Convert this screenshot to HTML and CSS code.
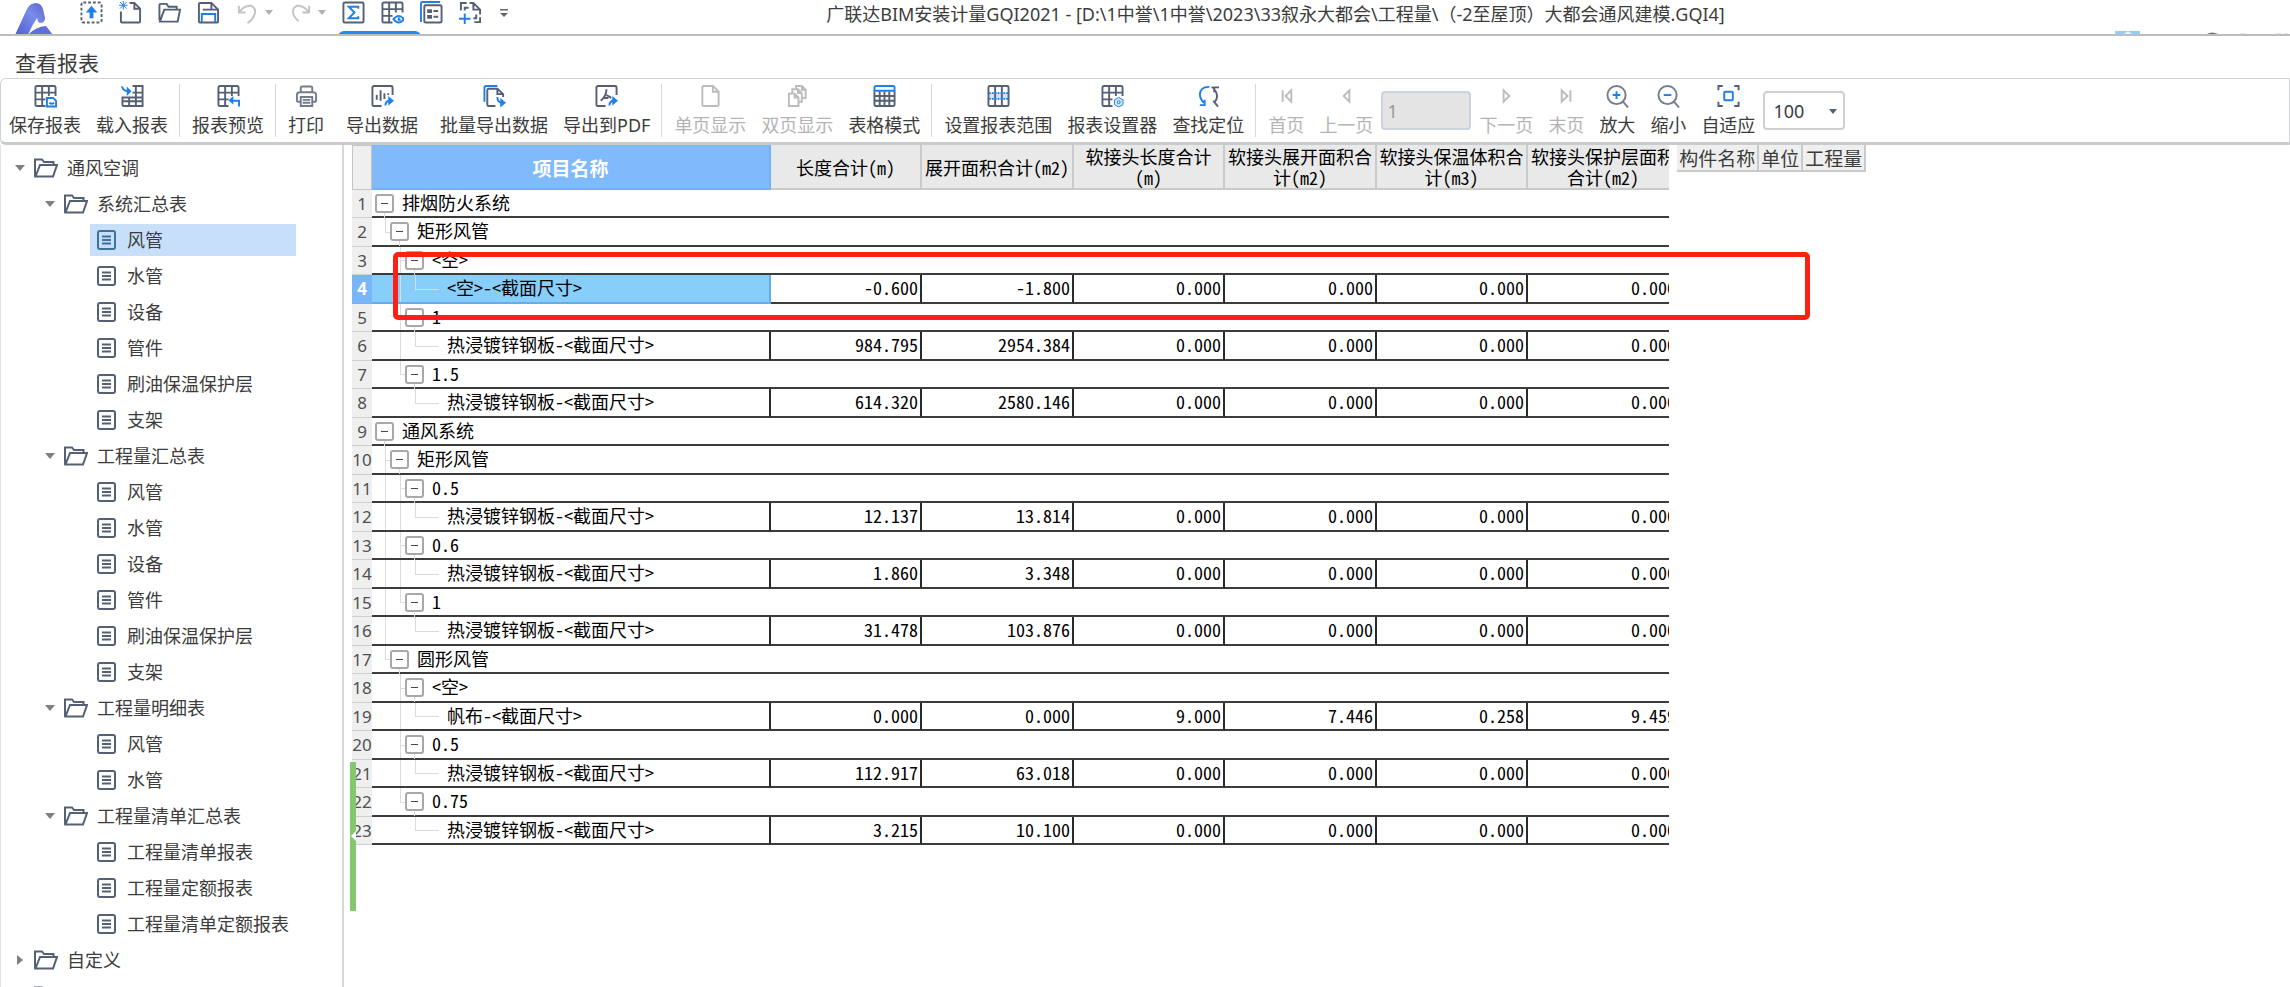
FILE: index.html
```html
<!DOCTYPE html>
<html lang="zh-CN">
<head>
<meta charset="utf-8">
<title>广联达BIM安装计量GQI2021</title>
<link rel="stylesheet" href="styles.css">
</head>
<body>
<svg class="defs" aria-hidden="true">
  <symbol id="folder" viewBox="0 0 24 20"><path d="M1 18.500V1.500h7l2 2.500h9.500v3M1.500 18.500L6 7h17l-4 11.500z"/></symbol>
  <symbol id="doc" viewBox="0 0 20 20"><rect x="1" y="1" width="17" height="18" rx="2"/><path d="M5 6.500h9M5 10h9M5 13.500h9"/></symbol>
  <symbol id="grid" viewBox="0 0 24 24"><path d="M12 22.500H3a1.500 1.500 0 0 1-1.500-1.500V3A1.500 1.500 0 0 1 3 1.500h18A1.500 1.500 0 0 1 22.500 3v9M1.500 8.500h21M1.500 15.500H12M8.500 1.500v21M15.500 1.500V12"/></symbol>
  <symbol id="caret" viewBox="0 0 10 6"><path d="M0 0h10L5 6z"/></symbol>
</svg>

<header class="titlebar">
  <svg class="logo" viewBox="0 0 38 32"><defs><linearGradient id="lg" x1="0" y1="1" x2="1" y2="0"><stop offset="0" stop-color="#4c5fd0"/><stop offset=".6" stop-color="#7a8cea"/><stop offset="1" stop-color="#5a62c8"/></linearGradient></defs><path fill="url(#lg)" d="M0 32L12 6Q15 0 21 0q5 0 7 6l2 9q0 5-5 5-2 0-3-5-6 9-9 17z"/><path fill="#5f6fdb" d="M13 32q7-8 18-9l7 9z"/></svg>
  <nav class="quick" aria-label="快速访问">
    <button type="button" aria-label="上传"><svg viewBox="0 0 24 24"><rect x="1.500" y="1.500" width="21" height="21" rx="2" stroke-dasharray="3 2"/><path class="fb" d="M12 5l6 7h-4v6h-4v-6H6z"/></svg></button>
    <button type="button" aria-label="新建"><svg viewBox="0 0 24 24"><path d="M2 11v10.500a1 1 0 0 0 1 1h18a1 1 0 0 0 1-1V8l-6-6h-5M16 2v6h6"/><path class="b thin" d="M1 1l7 7M8 1L1 8M4.500 0v9M0 4.500h9"/></svg></button>
    <button type="button" aria-label="打开"><svg viewBox="0 0 24 24"><path d="M1.500 20V4.500a1.500 1.500 0 0 1 1.500-1.500h6l2 3h8.500V9M2 21.500L6.500 9H23l-2.500 12.500z"/></svg></button>
    <button type="button" aria-label="保存"><svg viewBox="0 0 24 24"><path d="M2 21.500V3a1 1 0 0 1 1-1h12l7 7v12.500a1 1 0 0 1-1 1H3a1 1 0 0 1-1-1M6 9h8M15 2v7h7"/><path class="b" d="M5 22v-8.500h14V22"/></svg></button>
    <span class="split"><button type="button" aria-label="撤销"><svg class="off" viewBox="0 0 24 24"><path d="M3 5v7h7M3 12Q9 4 16 5q6 3 3 10-2 5-7 8"/></svg></button><button type="button" class="more" aria-label="撤销列表"><svg class="tri"><use href="#caret"/></svg></button></span>
    <span class="split"><button type="button" aria-label="重做"><svg class="off" viewBox="0 0 24 24"><path d="M21 5v7h-7M21 12Q15 4 8 5 2 8 5 15q2 4 5 6"/></svg></button><button type="button" class="more" aria-label="重做列表"><svg class="tri"><use href="#caret"/></svg></button></span>
    <button type="button" aria-label="汇总"><svg viewBox="0 0 24 24"><rect x="1.500" y="1.500" width="21" height="21" rx="1.500"/><path class="b" d="M17 8V6H7l6 6-6 6h10v-2"/></svg></button>
    <button type="button" aria-label="查看报表"><svg viewBox="0 0 24 24"><use href="#grid"/><path class="b" d="M13 19q5.500-7 11 0-5.500 7-11 0zM18.500 17v2.500h2"/></svg></button>
    <button type="button" aria-label="属性"><svg viewBox="0 0 24 24"><path class="b" d="M1 22V2.500A1.500 1.500 0 0 1 2.500 1H21"/><rect x="4.500" y="4.500" width="18" height="18" rx="1.500"/><path d="M8.500 9.500h3v2h-3zM8.500 15.500h3v2h-3zM14 10.500h5M14 16.500h5"/></svg></button>
    <button type="button" aria-label="添加页"><svg viewBox="0 0 24 24"><path d="M2 10V2h6M11 2h4l7 7v5M22 17v5h-6M15 2v7h7M6 10V7h4M18 14v4h-3"/><path class="b" d="M6 13v11M0 18.500h12"/></svg></button>
    <button type="button" class="more" aria-label="自定义快速访问"><svg class="menu" viewBox="0 0 10 12"><path d="M0 1h10v2H0zM0 6h10l-5 5z"/></svg></button>
  </nav>
  <h1>广联达BIM安装计量GQI2021 - [D:\1中誉\1中誉\2023\33叙永大都会\工程量\（-2至屋顶）大都会通风建模.GQI4]</h1>
  <svg class="cutoff" viewBox="0 0 250 34"><path fill="#9acbf8" d="M75 31h25v3H75z"/><path fill="#e6f2fd" d="M84 34l4-3 4 3z"/><path fill="#70757d" d="M167 34q5-3 11 0z"/><path fill="#e4e4e4" d="M200 33h6v1h-6zM236 33h5v1h-5zM244 33h4v1h-4z"/></svg>
</header>

<section class="ribbon">
  <h2>查看报表</h2>
  <div class="toolbar">
    <div class="group">
      <button type="button"><svg viewBox="0 0 24 24"><use href="#grid"/><path class="b" d="M13.500 14h6.500l3 3v6h-9.500zM16 19q2.500 2 5 0"/></svg>保存报表</button>
      <button type="button"><svg viewBox="0 0 24 24"><path d="M12 1.500h10.500v21H3a1.500 1.500 0 0 1-1.500-1.500v-7.500h21M12 8.500h10.500M15.500 1.500v21M8.500 13v9.500M1.500 17.500h21"/><path class="b" d="M1 2q1 5 7 5"/><path class="fb" d="M6 2l5 5-5 5z"/></svg>载入报表</button>
    </div>
    <div class="group">
      <button type="button"><svg viewBox="0 0 24 24"><use href="#grid"/><path class="b" d="M23 23v-6h-8"/><path class="fb" d="M17 12v9l-5-4.500z"/></svg>报表预览</button>
    </div>
    <div class="group">
      <button type="button"><svg class="soft" viewBox="0 0 24 24"><path d="M6 8V3.500A1.500 1.500 0 0 1 7.500 2h9A1.500 1.500 0 0 1 18 3.500V8M6 18H3a1 1 0 0 1-1-1v-6q0-3 3-3h14q3 0 3 3v6a1 1 0 0 1-1 1h-3M6 13h12v9.500H6zM8 16h8M8 19h8"/></svg>打印</button>
      <button type="button" class="wide"><svg viewBox="0 0 24 24"><path d="M11 22.500H3A1.500 1.500 0 0 1 1.500 21V3A1.500 1.500 0 0 1 3 1.500h18A1.500 1.500 0 0 1 22.500 3v8M6 11v5M10 6v11M14 9v6M18 9v2"/><path class="b" d="M15 22q0-5 5-5"/><path class="fb" d="M18 12l6 5-6 5z"/></svg>导出数据</button>
      <button type="button"><svg viewBox="0 0 24 24"><path class="b" d="M1.500 18V3A1.500 1.500 0 0 1 3 1.500h12"/><path d="M13 22.500H6A1.500 1.500 0 0 1 4.500 21V6A1.500 1.500 0 0 1 6 4.500h9l6 5.500v3M15 4.500V10h6"/><path class="b" d="M15 13q0 6 5 6"/><path class="fb" d="M18 14l6 5-6 5z"/></svg>批量导出数据</button>
      <button type="button"><svg viewBox="0 0 24 24"><path d="M11 22.500H3A1.500 1.500 0 0 1 1.500 21V3A1.500 1.500 0 0 1 3 1.500h18A1.500 1.500 0 0 1 22.500 3v8M12 5q0 7-6 12M12 11l5 3M8 14h6"/><path class="b" d="M15 22q0-5 5-5"/><path class="fb" d="M18 12l6 5-6 5z"/></svg>导出到PDF</button>
    </div>
    <div class="group">
      <button type="button" disabled><svg viewBox="0 0 24 24"><path d="M4 1.500h10.500l6 6V21a1.500 1.500 0 0 1-1.500 1.500H5A1.500 1.500 0 0 1 3.500 21V3A1.500 1.500 0 0 1 5 1.500M14.500 1.500v6h6"/></svg>单页显示</button>
      <button type="button" disabled><svg viewBox="0 0 24 24"><path d="M3 9.500h6l4 4v9H3zM9 9.500v4h4M6.500 9V5h6L16.500 9v9H13M12.500 5v4h4M10.500 5V1.500h6l4 4V14h-4M16.500 1.500v4h4"/></svg>双页显示</button>
      <button type="button"><svg viewBox="0 0 24 24"><path d="M1.500 7v14A1.500 1.500 0 0 0 3 22.500h18a1.500 1.500 0 0 0 1.500-1.500V7M1.500 12h21M1.500 17h21M7 7v15M12 7v15M17 7v15"/><path class="b" d="M1.500 6.500V3A1.500 1.500 0 0 1 3 1.500h18A1.500 1.500 0 0 1 22.500 3v3.500z"/></svg>表格模式</button>
    </div>
    <div class="group">
      <button type="button"><svg viewBox="0 0 24 24"><path class="pale" d="M2 9h20v6H2z"/><rect x="1.500" y="1.500" width="21" height="21" rx="1.500"/><path d="M8.500 1.500v21M15.500 1.500v21"/><path class="b" stroke-dasharray="2 1" d="M2 9h20M2 15h20"/></svg>设置报表范围</button>
      <button type="button"><svg viewBox="0 0 24 24"><use href="#grid"/><path class="pale" d="M18.500 13.500l4.500 2.500v5l-4.500 2.500L14 21v-5z"/><path class="b thin" d="M18.500 13.500l4.500 2.500v5l-4.500 2.500L14 21v-5zM17 18.500a1.500 1.500 0 1 0 3 0a1.500 1.500 0 1 0-3 0"/></svg>报表设置器</button>
      <button type="button"><svg viewBox="0 0 24 24"><path class="b" d="M13 2.500Q4 2 3 10q0 5 4 9M3 21.500h5V16"/><path d="M15 3q2 0 3 1M18 8V3h5M18 5q6 7 0 14M17 17l5 6"/></svg>查找定位</button>
    </div>
    <div class="group pager">
      <button type="button" disabled><svg viewBox="0 0 24 24"><path d="M8 6v12M17 6v12l-6-6z"/></svg>首页</button>
      <button type="button" disabled><svg viewBox="0 0 24 24"><path d="M15 6v12l-6-6z"/></svg>上一页</button>
      <input type="text" value="1" aria-label="页码" disabled>
      <button type="button" disabled><svg viewBox="0 0 24 24"><path d="M9 6v12l6-6z"/></svg>下一页</button>
      <button type="button" disabled><svg viewBox="0 0 24 24"><path d="M16 6v12M7 6v12l6-6z"/></svg>末页</button>
      <button type="button"><svg class="soft" viewBox="0 0 24 24"><circle cx="11" cy="11" r="9.500"/><path d="M17.500 17.500L23 24"/><path class="b" d="M11 7v8M7 11h8"/></svg>放大</button>
      <button type="button"><svg class="soft" viewBox="0 0 24 24"><circle cx="11" cy="11" r="9.500"/><path d="M17.500 17.500L23 24"/><path class="b" d="M7 11h8"/></svg>缩小</button>
      <button type="button"><svg viewBox="0 0 24 24"><path d="M1.500 6V1.500H6M18 1.500h4.500V6M22.500 18v4.500H18M6 22.500H1.500V18"/><rect class="b" x="7.500" y="7.500" width="9" height="9" rx="1"/></svg>自适应</button>
      <span class="zoom"><select aria-label="缩放比例"><option>100</option></select><svg class="tri"><use href="#caret"/></svg></span>
    </div>
  </div>
</section>

<main class="workspace">
  <nav class="tree" aria-label="报表目录">
    <ul>
      <li class="l0"><svg class="tri"><use href="#caret"/></svg><svg class="fold"><use href="#folder"/></svg>通风空调</li>
      <li class="l1"><svg class="tri"><use href="#caret"/></svg><svg class="fold"><use href="#folder"/></svg>系统汇总表</li>
      <li class="l2"><a class="on" href="#"><svg class="doc"><use href="#doc"/></svg>风管</a></li>
      <li class="l2"><a href="#"><svg class="doc"><use href="#doc"/></svg>水管</a></li>
      <li class="l2"><a href="#"><svg class="doc"><use href="#doc"/></svg>设备</a></li>
      <li class="l2"><a href="#"><svg class="doc"><use href="#doc"/></svg>管件</a></li>
      <li class="l2"><a href="#"><svg class="doc"><use href="#doc"/></svg>刷油保温保护层</a></li>
      <li class="l2"><a href="#"><svg class="doc"><use href="#doc"/></svg>支架</a></li>
      <li class="l1"><svg class="tri"><use href="#caret"/></svg><svg class="fold"><use href="#folder"/></svg>工程量汇总表</li>
      <li class="l2"><a href="#"><svg class="doc"><use href="#doc"/></svg>风管</a></li>
      <li class="l2"><a href="#"><svg class="doc"><use href="#doc"/></svg>水管</a></li>
      <li class="l2"><a href="#"><svg class="doc"><use href="#doc"/></svg>设备</a></li>
      <li class="l2"><a href="#"><svg class="doc"><use href="#doc"/></svg>管件</a></li>
      <li class="l2"><a href="#"><svg class="doc"><use href="#doc"/></svg>刷油保温保护层</a></li>
      <li class="l2"><a href="#"><svg class="doc"><use href="#doc"/></svg>支架</a></li>
      <li class="l1"><svg class="tri"><use href="#caret"/></svg><svg class="fold"><use href="#folder"/></svg>工程量明细表</li>
      <li class="l2"><a href="#"><svg class="doc"><use href="#doc"/></svg>风管</a></li>
      <li class="l2"><a href="#"><svg class="doc"><use href="#doc"/></svg>水管</a></li>
      <li class="l1"><svg class="tri"><use href="#caret"/></svg><svg class="fold"><use href="#folder"/></svg>工程量清单汇总表</li>
      <li class="l2"><a href="#"><svg class="doc"><use href="#doc"/></svg>工程量清单报表</a></li>
      <li class="l2"><a href="#"><svg class="doc"><use href="#doc"/></svg>工程量定额报表</a></li>
      <li class="l2"><a href="#"><svg class="doc"><use href="#doc"/></svg>工程量清单定额报表</a></li>
      <li class="l0"><svg class="tri shut"><use href="#caret"/></svg><svg class="fold"><use href="#folder"/></svg>自定义</li>
      <li class="l0"><svg class="tri shut"><use href="#caret"/></svg><svg class="fold"><use href="#folder"/></svg></li>
    </ul>
  </nav>

  <section class="report">
    <table>
      <colgroup><col class="c-no"><col class="c-name"><col class="c-a"><col class="c-b"><col class="c-a"><col class="c-b"><col class="c-a"><col class="c-b"></colgroup>
      <thead><tr><td class="corner"></td><th class="key">项目名称</th><th>长度合计(m)</th><th>展开面积合计(m2)</th><th>软接头长度合计(m)</th><th>软接头展开面积合计(m2)</th><th>软接头保温体积合计(m3)</th><th>软接头保护层面积合计(m2)</th></tr></thead>
      <tbody>
        <tr><th>1</th><td colspan="7"><div class="node"><button type="button" aria-label="折叠"></button>排烟防火系统</div></td></tr>
        <tr><th>2</th><td colspan="7"><div class="node"><i class="end"></i><button type="button" aria-label="折叠"></button>矩形风管</div></td></tr>
        <tr><th>3</th><td colspan="7"><div class="node"><i></i><i class="tee"></i><button type="button" aria-label="折叠"></button>&lt;空&gt;</div></td></tr>
        <tr class="cur"><th>4</th><td><div class="node"><i></i><i class="bar"></i><i class="end leaf"></i>&lt;空&gt;-&lt;截面尺寸&gt;</div></td><td>-0.600</td><td>-1.800</td><td>0.000</td><td>0.000</td><td>0.000</td><td>0.000</td></tr>
        <tr><th>5</th><td colspan="7"><div class="node"><i></i><i class="tee"></i><button type="button" aria-label="折叠"></button>1</div></td></tr>
        <tr><th>6</th><td><div class="node"><i></i><i class="bar"></i><i class="end leaf"></i>热浸镀锌钢板-&lt;截面尺寸&gt;</div></td><td>984.795</td><td>2954.384</td><td>0.000</td><td>0.000</td><td>0.000</td><td>0.000</td></tr>
        <tr><th>7</th><td colspan="7"><div class="node"><i></i><i class="end"></i><button type="button" aria-label="折叠"></button>1.5</div></td></tr>
        <tr><th>8</th><td><div class="node"><i></i><i></i><i class="end leaf"></i>热浸镀锌钢板-&lt;截面尺寸&gt;</div></td><td>614.320</td><td>2580.146</td><td>0.000</td><td>0.000</td><td>0.000</td><td>0.000</td></tr>
        <tr><th>9</th><td colspan="7"><div class="node"><button type="button" aria-label="折叠"></button>通风系统</div></td></tr>
        <tr><th>10</th><td colspan="7"><div class="node"><i class="tee"></i><button type="button" aria-label="折叠"></button>矩形风管</div></td></tr>
        <tr><th>11</th><td colspan="7"><div class="node"><i class="bar"></i><i class="tee"></i><button type="button" aria-label="折叠"></button>0.5</div></td></tr>
        <tr><th>12</th><td><div class="node"><i class="bar"></i><i class="bar"></i><i class="end leaf"></i>热浸镀锌钢板-&lt;截面尺寸&gt;</div></td><td>12.137</td><td>13.814</td><td>0.000</td><td>0.000</td><td>0.000</td><td>0.000</td></tr>
        <tr><th>13</th><td colspan="7"><div class="node"><i class="bar"></i><i class="tee"></i><button type="button" aria-label="折叠"></button>0.6</div></td></tr>
        <tr><th>14</th><td><div class="node"><i class="bar"></i><i class="bar"></i><i class="end leaf"></i>热浸镀锌钢板-&lt;截面尺寸&gt;</div></td><td>1.860</td><td>3.348</td><td>0.000</td><td>0.000</td><td>0.000</td><td>0.000</td></tr>
        <tr><th>15</th><td colspan="7"><div class="node"><i class="bar"></i><i class="end"></i><button type="button" aria-label="折叠"></button>1</div></td></tr>
        <tr><th>16</th><td><div class="node"><i class="bar"></i><i></i><i class="end leaf"></i>热浸镀锌钢板-&lt;截面尺寸&gt;</div></td><td>31.478</td><td>103.876</td><td>0.000</td><td>0.000</td><td>0.000</td><td>0.000</td></tr>
        <tr><th>17</th><td colspan="7"><div class="node"><i class="end"></i><button type="button" aria-label="折叠"></button>圆形风管</div></td></tr>
        <tr><th>18</th><td colspan="7"><div class="node"><i></i><i class="tee"></i><button type="button" aria-label="折叠"></button>&lt;空&gt;</div></td></tr>
        <tr><th>19</th><td><div class="node"><i></i><i class="bar"></i><i class="end leaf"></i>帆布-&lt;截面尺寸&gt;</div></td><td>0.000</td><td>0.000</td><td>9.000</td><td>7.446</td><td>0.258</td><td>9.459</td></tr>
        <tr><th>20</th><td colspan="7"><div class="node"><i></i><i class="tee"></i><button type="button" aria-label="折叠"></button>0.5</div></td></tr>
        <tr><th>21</th><td><div class="node"><i></i><i class="bar"></i><i class="end leaf"></i>热浸镀锌钢板-&lt;截面尺寸&gt;</div></td><td>112.917</td><td>63.018</td><td>0.000</td><td>0.000</td><td>0.000</td><td>0.000</td></tr>
        <tr><th>22</th><td colspan="7"><div class="node"><i></i><i class="end"></i><button type="button" aria-label="折叠"></button>0.75</div></td></tr>
        <tr><th>23</th><td><div class="node"><i></i><i></i><i class="end leaf"></i>热浸镀锌钢板-&lt;截面尺寸&gt;</div></td><td>3.215</td><td>10.100</td><td>0.000</td><td>0.000</td><td>0.000</td><td>0.000</td></tr>
      </tbody>
    </table>
  </section>

  <section class="detail">
    <table><thead><tr><th>构件名称</th><th>单位</th><th>工程量</th></tr></thead></table>
  </section>

  <div class="splitter"></div>
  <div class="callout"></div>
</main>
</body>
</html>
```

FILE: styles.css
```css
* { box-sizing: border-box; }

html, body { height: 100%; }

body {
  margin: 0;
  display: flex;
  flex-direction: column;
  overflow: hidden;
  background: #fff;
  color: #3c3c3c;
  font: 18px/24px "Noto Sans", "Noto Sans CJK SC", sans-serif;
}

button {
  padding: 0;
  border: 0;
  background: none;
  color: inherit;
  font: inherit;
}

svg {
  flex: none;
  fill: none;
  stroke: #566074;
  stroke-width: 2;
}

.defs { position: absolute; width: 0; height: 0; }
.b { stroke: #1f7fee; }
.thin { stroke-width: 1; }
.fb { fill: #1f7fee; stroke: none; }
.pale { fill: #cfe3fb; stroke: none; }
.soft { stroke: #747c8c; }
.off { stroke: #c4c4c4; }
.tri { width: 10px; height: 6px; fill: #808080; stroke: none; }

/* title bar */
.titlebar {
  flex: none;
  display: flex;
  height: 36px;
  border-bottom: 2px solid #bdbdbd;
  overflow: hidden;
}

.logo { width: 38px; height: 32px; margin: 3px 26px 0 15px; stroke: none; }

.quick { display: flex; gap: 15px; height: 25px; align-items: center; }
.quick button { display: flex; width: 24px; justify-content: center; }
.quick button svg { width: 23px; height: 23px; }
.quick .more { width: 14px; }
.quick .more .tri { width: 8px; height: 5px; fill: #b0b0b0; }
.quick .more .menu { width: 8px; height: 12px; fill: #666; stroke: none; }
.quick .split { display: flex; align-items: center; gap: 3px; margin-right: -3px; }
.quick button[aria-label="汇总"] { position: relative; }
.quick button[aria-label="汇总"]::after {
  content: "";
  position: absolute;
  top: 30px;
  left: -3px;
  width: 83px;
  height: 6px;
  border-radius: 6px 6px 0 0;
  background: #1e8af5;
}

.titlebar h1 {
  flex: 1;
  margin: 0;
  padding-top: 2px;
  font-size: 18px;
  font-weight: 400;
  text-align: center;
  white-space: nowrap;
}

.cutoff { width: 250px; height: 34px; stroke: none; }

/* ribbon */
.ribbon { flex: none; }

.ribbon h2 {
  margin: 0;
  padding: 15px 0 3px 15px;
  font-size: 21px;
  font-weight: 400;
  line-height: 24px;
}

.toolbar {
  display: flex;
  height: 67px;
  padding: 5px 0;
  border: 1px solid #d0d4d8;
  border-bottom: 3px solid #c8cccf;
  border-radius: 6px 0 0 6px;
}

.group { display: flex; gap: 1px; padding: 0 4px 0 5px; }
.group + .group { border-left: 1px solid #d8d8d8; }
.group:first-child { padding-left: 1px; }

.group button {
  display: flex;
  flex-direction: column;
  align-items: center;
  gap: 5px;
  padding: 0 7px;
  white-space: nowrap;
}

.group button svg { width: 23px; height: 24px; }
.group .wide { margin: 0 7px; }
.group button:disabled { color: #b4b4b4; }
.group button:disabled svg { stroke: #bcbcbc; stroke-width: 2; }

.group input, .group select {
  height: 39px;
  margin-top: 7px;
  border: 2px solid #ccd3de;
  border-radius: 4px;
  padding: 0 4px;
  font: inherit;
  color: #3c3c3c;
}

.group input { width: 90px; background: #e4e4e4; color: #9a9a9a; }

.zoom { position: relative; }
.zoom select { width: 82px; padding-left: 8px; border-color: #d0d0d0; background: #fff; appearance: none; }
.zoom .tri { position: absolute; right: 8px; top: 25px; width: 8px; height: 5px; fill: #566074; }

/* workspace */
.workspace {
  position: relative;
  flex: 1;
  min-height: 0;
  display: grid;
  grid-template-columns: 344px minmax(0, 43fr) minmax(0, 20fr);
  column-gap: 8px;
}

.tree { overflow: hidden; border-right: 2px solid #d8d8d8; border-left: 1px solid #e4e4e4; }
.tree ul { margin: 0; padding: 5px 0 0; list-style: none; }
.tree li { display: flex; align-items: center; gap: 9px; height: 36px; }
.tree .l0 { padding-left: 14px; }
.tree .l1 { padding-left: 44px; }
.tree .l2 { padding-left: 89px; }
.fold { width: 24px; height: 20px; }
.doc { width: 20px; height: 20px; }
.tree .tri.shut { transform: rotate(-90deg); }

.tree a {
  display: flex;
  align-items: center;
  gap: 10px;
  width: 206px;
  height: 32px;
  padding-left: 7px;
  color: inherit;
  text-decoration: none;
}

.tree a.on { background: #c8dffa; }
.tree a.on .doc { stroke: #3d6f9f; }

/* report grid */
.report { overflow: hidden; }

.report table {
  width: 1328px;
  table-layout: fixed;
  border-spacing: 0;
  color: #000;
  font-family: "Noto Sans CJK SC", sans-serif;
  font-feature-settings: "hwid";
}

.c-no { width: 20px; }
.c-name { width: 399px; }
.c-a { width: 151px; }
.c-b { width: 152px; }

.report thead th, .detail th {
  border-right: 2px solid #cacaca;
  border-bottom: 2px solid #cacaca;
  background: #e9e9e9;
  font-weight: 400;
}

.report thead th { height: 45px; padding: 1px 2px 0; line-height: 21px; }

.report thead .key {
  border-color: #70b0f5;
  background: #80bafa;
  color: #fff;
  font-size: 19px;
  font-weight: 700;
}

.corner { border: 1px solid #c4c4c4; background: #efefef; }

.report tbody th {
  padding: 0;
  border: 1px solid #cfcfcf;
  border-width: 0 0 1px;
  background: #efefef;
  color: #505050;
  font: 17px/24px "Noto Sans", sans-serif;
}

.report tbody td {
  height: 28px;
  padding: 0 2px 0 3px;
  border-bottom: 2px solid #3c3c3c;
  line-height: 24px;
  text-align: right;
  vertical-align: top;
}

.report tbody tr:nth-child(even) td { height: 29px; }
.report tbody td:not([colspan]) { border-right: 2px solid #2a2a2a; }

.node { display: flex; align-items: flex-start; height: 26px; text-align: left; white-space: nowrap; }
tr:nth-child(even) .node { height: 27px; }

.node button {
  position: relative;
  align-self: center;
  width: 19px;
  height: 19px;
  margin-right: 8px;
  border: 2px solid #a8a8a8;
  border-radius: 3px;
  background: #fff;
}

.node button::before {
  content: "";
  position: absolute;
  top: 7px;
  left: 4px;
  width: 7px;
  height: 1px;
  background: #404858;
}

.node button::after {
  content: "";
  position: absolute;
  top: 17px;
  left: 7px;
  width: 1px;
  height: 5px;
  background: #dcdcdc;
}

/* tree guides */
.node i { position: relative; width: 15px; height: 100%; }
.node .leaf { width: 34px; margin-right: 8px; }
.node i::before, .node i::after { position: absolute; left: 10px; background: #dcdcdc; }
.node .bar::before, .node .tee::before, .node .end::before { content: ""; top: 0; width: 1px; height: 100%; }
.node .end::before { height: 50%; }
.node .tee::after, .node .end::after { content: ""; top: 50%; right: 0; height: 1px; }

.report .cur th { border-color: #70b0f5; background: #78b5f9; color: #fff; font-weight: 700; }
.report tbody .cur td:nth-child(2) { border-color: #68aaf0; background: #87cefa; }

/* detail grid */
.detail table { border-spacing: 0; font-family: "Noto Sans CJK SC", sans-serif; }
.detail th { height: 27px; padding: 0 2px; background: #efefef; font-size: 19px; line-height: 24px; }

.splitter {
  position: absolute;
  top: 617px;
  left: 350px;
  width: 6px;
  height: 149px;
  background: #84c76f;
}

.splitter::after {
  content: "";
  position: absolute;
  top: 69px;
  left: 1px;
  border: 5px solid transparent;
  border-right-color: #fff;
  border-left: 0;
}

.callout {
  position: absolute;
  top: 107px;
  left: 393px;
  width: 1417px;
  height: 68px;
  border: 5px solid #ff2014;
  border-radius: 5px;
}
```
